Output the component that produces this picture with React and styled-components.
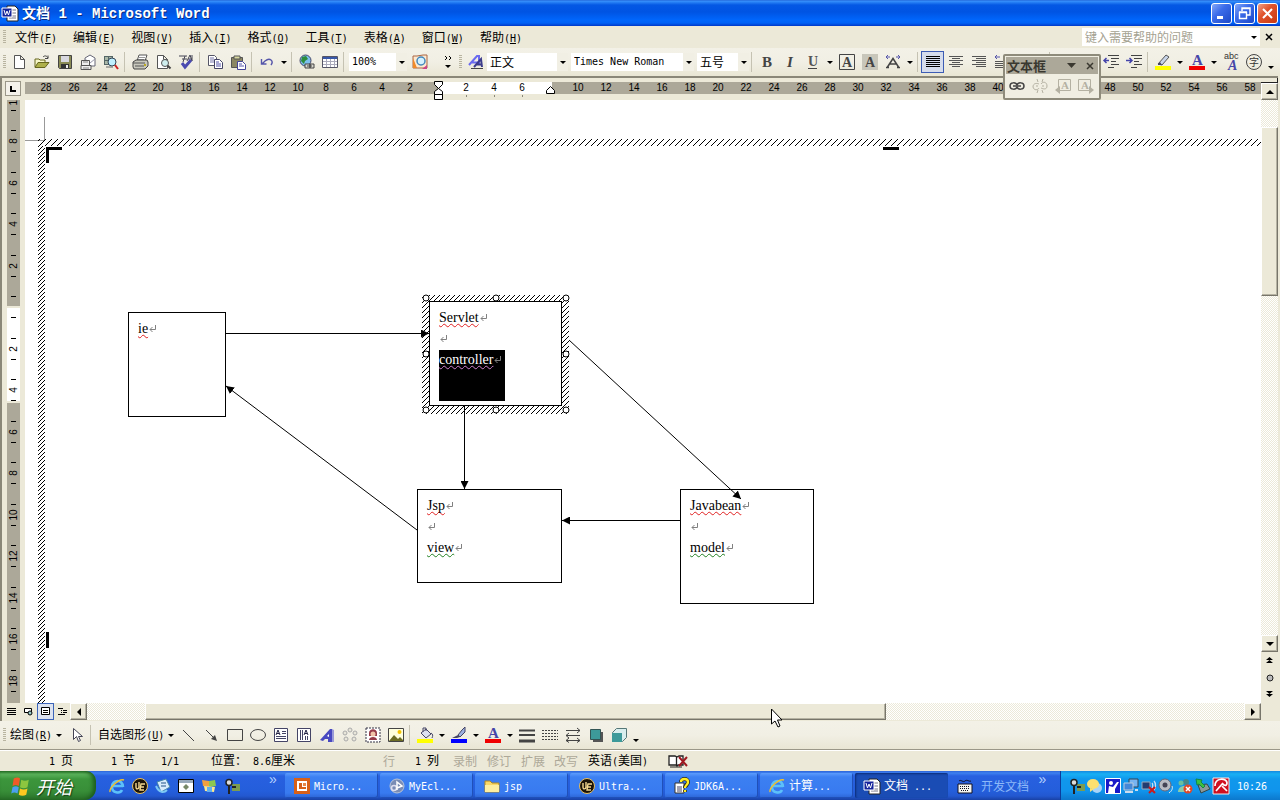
import React from 'react';
import styled, { createGlobalStyle, css } from 'styled-components';

const SANS = '"Noto Sans CJK SC", "Liberation Sans", sans-serif';
const MONO = '"DejaVu Sans Mono", "Noto Sans CJK SC", monospace';
const face = '#ece9d8';

const Global = createGlobalStyle`
  * { box-sizing: border-box; }
  body { margin: 0; background: ${face}; }
  button, select, input { font: inherit; color: inherit; margin: 0; border-radius: 0; }
  button { border: 0; padding: 0; background: none; }
  svg { display: block; flex: none; }
`;

const Window = styled.div`
  position: relative;
  display: flex;
  flex-direction: column;
  height: 100vh;
  min-height: 480px;
  overflow: hidden;
  background: ${face};
  color: #000;
  font: 12px/16px ${SANS};
  white-space: pre;
`;

const Latin = styled.span`
  font-family: ${MONO};
  font-size: 10px;
`;

/* Half-width characters use the narrow fixed face, ideographs the 12px one. */
function Txt({ children }) {
  return children.split(/([\x20-\x7e]+)/).map((part, i) =>
    i % 2 ? <Latin key={i}>{part}</Latin> : part
  );
}

/* ---------- Icons ---------- */

const paths = {
  word: <>
    <path d="M5 1h8l3 3v12H5z" fill="#fff" stroke="#222" />
    <path d="M8 5h6M9 8h5M9 11h5M7 13h7" stroke="#778" />
    <path d="M0 3h10v9H0z" fill="#16249c" stroke="#fff" />
    <path d="M2 5l1.500 5 1.500-4 1.500 4L8 5" fill="none" stroke="#fff" />
  </>,
  blank: <path d="M3.500 1.500h6l4 4v9h-10zM9.500 1.500v4h4" fill="#fff" stroke="#555" />,
  open: <>
    <path d="M1 13V5h4l1 1h5v3" fill="#f7f7c8" stroke="#66661e" />
    <path d="M1 13.500l3-5h11l-4 5z" fill="#aeb04a" stroke="#66661e" />
    <path d="M9 3c2-2 4-1 5 1m0-2.500V4.500h-3" fill="none" stroke="#444" />
  </>,
  save: <>
    <path d="M1.500 1.500h13v13h-12l-1-1z" fill="#8a8b55" stroke="#444" />
    <path d="M4 2h8v6H4z" fill="#d8d8e0" /><path d="M4 10h8v4H4z" fill="#333" /><path d="M9 11h2v3H9z" fill="#eee" />
  </>,
  mail: <>
    <path d="M5 4l5-3 5 3v8H5z" fill="#fff" stroke="#667" />
    <path d="M5 5l5 4 5-4" fill="none" stroke="#99a" />
    <path d="M1.500 6.500h8v5h-8zM1 11.500h10v4H1z" fill="#eee" stroke="#555" /><path d="M3 8h5M3 14h6" stroke="#888" />
  </>,
  search: <>
    <path d="M1 2h9v9H1z" fill="#566" /><path d="M2 3h3v3H2zM6 3h3v3H6zM2 7h3v3H2z" fill="#aab8a8" />
    <circle cx="9" cy="8" r="4" fill="#bff0ff" stroke="#345" /><path d="M12 11l3 4" stroke="#c22" strokeWidth="2" /><path d="M3 13h7" stroke="#666" />
  </>,
  print: <>
    <path d="M5 7l2-6h8l-2 6" fill="#fff" stroke="#555" /><path d="M7 3.500h6M6 5.500h6" stroke="#999" />
    <path d="M1 8l3-2h11l1 2v4l-3 3H2l-1-2z" fill="#c8c8bd" stroke="#444" /><path d="M1 9h12M3 12h9" stroke="#555" /><path d="M12 11h2" stroke="#ba2" strokeWidth="2" />
  </>,
  preview: <>
    <path d="M2.500 1.500h6l4 4v9h-10zM8.500 1.500v4h4" fill="#fff" stroke="#555" />
    <circle cx="10" cy="9" r="3.500" fill="#cfeeee" stroke="#555" /><path d="M12.500 11.500l3 3" stroke="#444" strokeWidth="2" />
  </>,
  spell: <>
    <path d="M1 2h8M4 5h5M7 2L5 8M9 7l3-6 2 6M10 5h4M14 1v6" fill="none" stroke="#445" />
    <path d="M4 9l3 4 6-7" fill="none" stroke="#4a4ab0" strokeWidth="3" />
  </>,
  copy: <>
    <path d="M1.500 1.500h6l2 2v8h-8z" fill="#fff" stroke="#556" /><path d="M3 4h4M3 6h4M3 8h4" stroke="#77a" />
    <path d="M7.500 5.500h5l3 3v6h-8z" fill="#fff" stroke="#446" /><path d="M9 8h3M9 10h5M9 12h5" stroke="#55a" />
  </>,
  paste: <>
    <path d="M1.500 3.500h11v10h-11z" fill="#8b8763" stroke="#555" /><path d="M4 2h6v3H4z" fill="#d8d8a0" stroke="#555" />
    <path d="M7.500 7.500h5l3 3v5h-8z" fill="#fff" stroke="#449" /><path d="M9 10h3M9 12h5" stroke="#55a" />
  </>,
  undo: <path d="M2.500 5v5h5M3 10l3-3c5-4 9 0 6 4" fill="none" stroke="#55a" strokeWidth="1.400" />,
  globe: <>
    <circle cx="6.500" cy="6.500" r="5.500" fill="#7cc0ee" stroke="#446" /><path d="M3 3l4-1 2 3-3 2-1 3-3-3z" fill="#2c8c3c" />
    <path d="M6 10h5v4H6zM11 10h4v4h-4zM8 12h5" fill="#d8d8d0" stroke="#444" />
  </>,
  table: <>
    <path d="M.5 2.500h15v11H.5z" fill="#fff" stroke="#556" /><path d="M1 3h14v2H1z" fill="#3858a8" />
    <path d="M1 7.500h14M1 10.500h14M4.500 5v8M8.500 5v8M12.500 5v8" stroke="#aab" />
  </>,
  docmap: <>
    <path d="M1 2h4l6-1h4v13H1z" fill="#fde9d0" stroke="#a64" /><path d="M1 4l4 10H1z" fill="#f08a2a" />
    <circle cx="9" cy="7" r="4" fill="#d6f2ff" stroke="#48b" strokeWidth="1.500" /><path d="M10 15l5-4v4z" fill="#c48" />
  </>,
  styles: <>
    <path d="M1 11L9 2h2v9M4 8.500h7" fill="none" stroke="#6a6af0" strokeWidth="2" />
    <path d="M6 13l7-8 1 8M8.500 10.500h5" fill="none" stroke="#3c3c8c" strokeWidth="2" />
    <path d="M3 14.500h12" stroke="#444" />
  </>,
  bold: <text x="3" y="13" fontFamily="Liberation Serif" fontWeight="700" fontSize="15" fill="#444">B</text>,
  italic: <text x="5" y="13" fontFamily="Liberation Serif" fontWeight="700" fontStyle="italic" fontSize="15" fill="#444">I</text>,
  underline: <><text x="3" y="12" fontFamily="Liberation Serif" fontWeight="700" fontSize="14" fill="#555">U</text><path d="M3 14.500h9" stroke="#444" /></>,
  boxA: <><path d="M.5.5h15v15H.5z" fill="none" stroke="#444" /><text x="3" y="13" fontFamily="Liberation Serif" fontWeight="700" fontSize="14" fill="#444">A</text></>,
  shadeA: <><path d="M0 0h16v16H0z" fill="#c8c6ba" /><text x="3" y="13" fontFamily="Liberation Serif" fontWeight="700" fontSize="14" fill="#444">A</text></>,
  scaleA: <><path d="M1 3h4M3 1L1 3l2 2M11 3h4M13 1l2 2-2 2" fill="none" stroke="#55a" /><path d="M1 13.500h3M12 13.500h3M2.500 13L8 4.500l5.500 8.500M5 10h6" fill="none" stroke="#444" strokeWidth="1.500" /></>,
  justify: <path d="M1 2.500h14M1 4.500h14M1 6.500h14M1 8.500h14M1 10.500h14M1 12.500h14" stroke="#000" />,
  center: <path d="M1 2.500h14M4 4.500h8M1 6.500h14M4 8.500h8M1 10.500h14M4 12.500h8" stroke="#555" />,
  right: <path d="M1 2.500h14M5 4.500h10M1 6.500h14M5 8.500h10M1 10.500h14M5 12.500h10" stroke="#555" />,
  distribute: <><path d="M1 3h5M3 1L1 3l2 2M10 3h5M13 1l2 2-2 2" fill="none" stroke="#55a" /><path d="M1 7.500h14M1 9.500h14M1 11.500h14M1 13.500h14" stroke="#555" /></>,
  spacing: <><path d="M3.500 2v11M1 4l2.500-2L6 4M1 11l2.500 2L6 11" fill="none" stroke="#55a" /><path d="M8 2.500h8M8 6.500h8M8 10.500h8M8 13.500h8" stroke="#555" /></>,
  numbered: <><path d="M2.500 2v3M2.500 7v3M2.500 12v3" stroke="#44a" /><path d="M6 3.500h9M6 8.500h9M6 13.500h9" stroke="#555" /></>,
  bullets: <><path d="M1 2h3v3H1zM1 7h3v3H1zM1 12h3v3H1z" fill="#44a" /><path d="M6 3.500h9M6 8.500h9M6 13.500h9" stroke="#555" /></>,
  outdent: <><path d="M1 6.500h5M3.500 4L1 6.500 3.500 9" fill="none" stroke="#44a" strokeWidth="1.500" /><path d="M5 1.500h11M8 4.500h8M8 7.500h5M8 10.500h8M5 13.500h6" stroke="#444" /></>,
  indent: <><path d="M0 6.500h6M3.500 4L6 6.500 3.500 9" fill="none" stroke="#44a" strokeWidth="1.500" /><path d="M5 1.500h11M8 4.500h8M8 7.500h5M8 10.500h8M5 13.500h6" stroke="#444" /></>,
  highlight: <><path d="M3 10l8-9 3 2-7 8z" fill="#c8d4e8" stroke="#555" /><path d="M3 10l2-2 2 3H3z" fill="#446" /><path d="M0 12h16v4H0z" fill="#ff0" /></>,
  fontcolor: <><text x="3" y="11" fontFamily="Liberation Serif" fontWeight="700" fontSize="15" fill="#4646a8">A</text><path d="M0 12h16v4H0z" fill="#f00000" /></>,
  phonetic: <><text x="1" y="5" fontFamily="Liberation Sans" fontSize="9" fill="#333">abc</text><text x="5" y="16" fontFamily="Liberation Serif" fontWeight="700" fontStyle="italic" fontSize="14" fill="#4646a8">A</text></>,
  circled: <><circle cx="8" cy="8" r="7.500" fill="none" stroke="#444" /><text x="3" y="12" fontFamily="Noto Sans CJK SC" fontSize="10" fill="#333">字</text></>,
  link: <path d="M1 8c0-4 6-4 7-1M1 8c0 4 6 4 7 1M8 7c1-3 7-3 7 1M8 9c1 3 7 3 7-1M4 8h8" fill="none" stroke="currentColor" strokeWidth="1.500" />,
  unlink: <path d="M1 9c0-4 4-4 6-3M1 9c1 4 5 3 6 1M9 6c2-3 6-2 6 2s-4 3-6 2M5 1l1 3M11 1l-1 3M5 15l1-3M11 15l-1-3M4 8h2M10 8h2" fill="none" stroke="currentColor" />,
  prevbox: <><path d="M3.500 1.500h12v11h-12z" fill="none" stroke="currentColor" /><text x="6" y="11" fontFamily="Liberation Serif" fontWeight="700" fontSize="11" fill="currentColor">A</text><path d="M0 12l5-4v8z" fill="currentColor" /></>,
  nextbox: <><path d="M.5 1.500h12v11H.5z" fill="none" stroke="currentColor" /><text x="3" y="11" fontFamily="Liberation Serif" fontWeight="700" fontSize="11" fill="currentColor">A</text><path d="M16 12l-5-4v8z" fill="currentColor" /></>,
  pointer: <path d="M4.500 1.500v11l3-3 2 5 2-1-2-4h4z" fill="#fff" stroke="#445" />,
  line: <path d="M2 3l11 11" stroke="#444" />,
  arrowline: <><path d="M2 3l9 9" stroke="#444" /><path d="M13 14l-6-2 4-4z" fill="#444" /></>,
  rect: <path d="M.5 2.500h15v11H.5z" fill="none" stroke="#444" />,
  ellipse: <ellipse cx="8" cy="8" rx="7.500" ry="5.500" fill="none" stroke="#444" />,
  textbox: <><path d="M1.500 1.500h13v13h-13z" fill="#fff" stroke="#446" /><path d="M9 4.500h4M9 6.500h4M3 9.500h10M3 11.500h10" stroke="#446" /><path d="M3 8l2-5 2 5M4 6.500h2" fill="none" stroke="#224" /></>,
  vtextbox: <><path d="M1.500 1.500h13v13h-13z" fill="#fff" stroke="#446" /><path d="M4.500 3v10M6.500 3v10M9.500 9v4M11.500 9v4" stroke="#446" /><path d="M8 8l2-5 2 5M9 6.500h2" fill="none" stroke="#224" /></>,
  wordart: <><path d="M1 13L11 2h2v13h-4v-3H6l-2 2z" fill="#4848c0" /><path d="M8 9l2-2v3z" fill="#fff" /><path d="M13 2l2 1v12h-2z" fill="#9a9ad8" /></>,
  diagram: <g fill="#e8e6da" stroke="#aaa"><circle cx="8" cy="3" r="2" /><circle cx="13" cy="6" r="2" /><circle cx="12" cy="12" r="2" /><circle cx="4" cy="12" r="2" /><circle cx="3" cy="6" r="2" /></g>,
  clipart: <><path d="M1 1h14v14H1z" fill="#fff" stroke="#334" strokeDasharray="2 1" /><path d="M4 13c0-4 8-4 8 0M4 6c0-5 8-5 8 0v3H4z" fill="#943a48" /><circle cx="8" cy="7" r="2.500" fill="#f0c4a8" /></>,
  picture: <><path d="M.5 1.500h15v13H.5z" fill="#ffd" stroke="#444" /><path d="M1 14l5-6 4 4 2-2 3 3v1z" fill="#6c6c24" /><circle cx="11.500" cy="5" r="2" fill="#f4c400" /></>,
  fill: <><path d="M4 6l5-4 5 5-5 4z" fill="#dce0f0" stroke="#446" /><path d="M6 5V1h3v3M14 6c2 1 2 3 1 5" fill="none" stroke="#446" /><path d="M0 12h16v4H0z" fill="#ff0" /></>,
  linecolor: <><path d="M14 0l-3 3-4 5 2 2 5-5z" fill="#9cb0e0" stroke="#446" /><path d="M7 8l2 2-3 1H1z" fill="#446" /><path d="M0 12h16v4H0z" fill="#00f" /></>,
  weights: <path d="M0 3.500h16M0 8h16M0 13.500h16M0 14.500h16" stroke="#444" strokeWidth="2" />,
  dashes: <path d="M0 3.500h16M0 6.500h16M0 9.500h16M0 12.500h16" stroke="#444" strokeDasharray="2 1" />,
  arrows: <path d="M1 3.500h14M12 1l3 2.500L12 6M1 8.500h14M4 6L1 8.500 4 11M1 13.500h14M12 11l3 2.500-3 2M4 11l-3 2.500 3 2" fill="none" stroke="#444" />,
  shadow: <><path d="M5 5h10v10H5z" fill="#555" /><path d="M2.500 2.500h10v10h-10z" fill="#3d9a9a" stroke="#355" /></>,
  cube: <><path d="M1.500 5.500l4-4h10v9l-4 4z" fill="#d8eeee" stroke="#577" /><path d="M1 6h10v9H1z" fill="#3d9a9a" /></>,
  bookx: <><path d="M1 3h6l2 1 2-1h4v9h-5l-1 1-1-1H1zM8.500 4v8" fill="#fff" stroke="#222" strokeWidth="1.300" /><path d="M2 14h12" stroke="#222" /><path d="M11 4l8 9M19 4l-8 9" stroke="#a01820" strokeWidth="2" /></>,
  flag: <><path d="M3 2c2-1 4-1 5 0L7 8C5 7 4 7 2 8z" fill="#f05a28" /><path d="M9 3c2 1 4 1 6 0l-1 6c-2 1-4 1-6 0z" fill="#8cc63f" /><path d="M2 9c2-1 3-1 5 0l-1 5c-2-1-3-1-5 0z" fill="#4aa0f0" /><path d="M8 10c2 1 4 1 6 0l-1 5c-2 1-4 1-6 0z" fill="#fcc820" /></>,
  ie: <><path d="M14 9c0-8-11-8-11 0 0 6 8 7 10 3M4 8h10" fill="none" stroke="#5cc0fa" strokeWidth="2.600" /><path d="M1 14C0 10 10 0 15 2" fill="none" stroke="#f0c030" strokeWidth="1.500" /></>,
  ue: <><circle cx="8" cy="8" r="7.500" fill="#1c1408" stroke="#e8c060" /><path d="M4 5v4c0 3 3 2 3 0V4M13 6H9l-1 6h4M9 9h3" fill="none" stroke="#f4d890" strokeWidth="1.400" /></>,
  desktop: <><path d="M2 4l9-3 4 8-9 5z" fill="#d8ecfc" stroke="#48a" /><path d="M1 8c3 7 8 7 11 4" fill="none" stroke="#7cc8f4" strokeWidth="2" /><path d="M6 5h5M6 8h5" stroke="#258" /></>,
  panel: <><path d="M.5 1.500h15v13H.5z" fill="#fff" stroke="#000" /><path d="M1 2h14v3H1z" fill="#9ab" /><path d="M8 6l3 3-3 3-3-3z" fill="#786" /></>,
  notes: <><path d="M1 2l7 1v6L2 8z" fill="#f0a040" /><path d="M8 3l6-1 1 6-7 1z" fill="#8cc850" /><path d="M3 8l11 1-1 5-9-1z" fill="#fce890" /><path d="M6 9h5v5H6z" fill="#60b0f0" /></>,
  key: <><path d="M8 6h8v7H8z" fill="#7c9c50" /><circle cx="5" cy="4.500" r="3" fill="#ddd" stroke="#222" strokeWidth="1.500" /><path d="M5 8v8M8 9h4" stroke="#222" strokeWidth="2" /></>,
  ppt: <><path d="M0 0h16v16H0z" fill="#d86018" /><path d="M3 3h10v10H3z" fill="#fff" /><path d="M5 5h3v4h4v2H5z" fill="#d86018" /><path d="M9 5h3v3H9z" fill="#e88848" /></>,
  eclipse: <><circle cx="8" cy="8" r="7" fill="#7a8cb4" stroke="#b8c4d8" /><circle cx="5" cy="10" r="2.500" fill="none" stroke="#dde" strokeWidth="1.500" /><path d="M8 12V4l5 4-5 2" fill="none" stroke="#fff" strokeWidth="1.500" /></>,
  folder: <><path d="M1 14V3h5l2 2h7v9z" fill="#f8d868" stroke="#b08820" /><path d="M1 14V7h14v7z" fill="#fdeea0" /></>,
  help: <><path d="M1 5h9v10H1z" fill="#fff" stroke="#333" /><path d="M3 9h5M3 11h5M3 13h5" stroke="#446" /><path d="M7 4c0-4 7-4 7 0 0 3-3 3-3 6M11 12v2" fill="none" stroke="#222" strokeWidth="4" /><path d="M7 4c0-4 7-4 7 0 0 3-3 3-3 6M11 12v2" fill="none" stroke="#fe2" strokeWidth="2.400" /></>,
  keyboard: <><path d="M2 3c2-2 4 2 6 0s4 1 6 0" fill="none" stroke="#112" /><path d="M1 6h14v9H1z" fill="#f4f4f0" stroke="#112" /><path d="M3 8.500h10M3 10.500h10M4 12.500h8" stroke="#112" strokeDasharray="1 1" /></>,
  chat: <><circle cx="10" cy="10" r="5" fill="#a8d4f8" /><ellipse cx="6" cy="6" rx="6" ry="5" fill="#fce070" /><path d="M3 10v4l4-3z" fill="#fce070" /></>,
  runner: <><path d="M.5.500h15v15H.5z" fill="#1818c8" stroke="#fff" /><circle cx="6" cy="5" r="2" fill="#fff" /><path d="M3 15l1-7 4 1 4-5h2l-4 7v4z" fill="#fff" /></>,
  screens: <><path d="M6 1h9v8H6z" fill="#78b4f0" stroke="#345" /><path d="M1 5h9v7H1z" fill="#4488d8" stroke="#bcd" /><path d="M2 14h8M12 12h3" stroke="#cde" strokeWidth="2" /></>,
  wireless: <><path d="M1 4h8v7H1z" fill="#223c70" stroke="#9ab" /><path d="M11 5c1 1 1 4 0 5M13 3c2 2 2 7 0 9" fill="none" stroke="#cde" strokeWidth="1.300" /><path d="M8 9l6 6M14 9l-6 6" stroke="#d01818" strokeWidth="2" /></>,
  volume: <><circle cx="6" cy="7" r="6" fill="#b8bcc4" stroke="#667" /><circle cx="6" cy="7" r="2.500" fill="#445" /><path d="M13 8c1 2 0 5-3 7" fill="none" stroke="#eee" /></>,
  messenger: <><circle cx="9" cy="4" r="3" fill="#488" /><circle cx="4" cy="5" r="2.500" fill="#68c0a0" /><path d="M1 14c0-8 12-8 13 0z" fill="#8ccca8" /><circle cx="11" cy="11" r="4.500" fill="#e04828" /><path d="M9 9l4 4M13 9l-4 4" stroke="#fff" strokeWidth="1.500" /></>,
  eject: <><path d="M3 7l9-1 3 5-9 4z" fill="#8a9898" stroke="#344" /><path d="M1 1l6 1-1 2 4 4-2 2-4-4-2 1z" fill="#3cc040" stroke="#184" /></>,
  avira: <><path d="M0 0h16v16H0z" fill="#d01020" stroke="#eee" /><path d="M2 8c0-9 12-8 12-3 0 4-5 2-4 0L3 13M9 8l5 5" fill="none" stroke="#fff" strokeWidth="1.700" /></>,
};

function Icon({ name, size = 16 }) {
  return <svg width={size} height={size} viewBox="0 0 16 16" overflow="visible" aria-hidden="true">{paths[name]}</svg>;
}

const Caret = styled.span`
  flex: none;
  width: 0;
  height: 0;
  border: solid transparent;
  ${p => p.$dir === 'up' && css`border-width: 0 4px 4px; border-bottom-color: #000;`}
  ${p => p.$dir === 'left' && css`border-width: 4px 4px 4px 0; border-right-color: #000;`}
  ${p => p.$dir === 'right' && css`border-width: 4px 0 4px 4px; border-left-color: #000;`}
  ${p => !p.$dir && css`border-width: 3px 3px 0; border-top-color: #000;`}
  ${p => p.$dir === 'down' && css`border-width: 4px 4px 0; border-top-color: #000;`}
`;

/* ---------- Title bar ---------- */

const TitleBar = styled.header`
  display: flex;
  flex: none;
  align-items: center;
  gap: 2px;
  height: 26px;
  padding: 0 2px;
  background: linear-gradient(#1c5cd0 0, #3a92fc 1px, #2a84f6 2px, #0458e4 5px, #0054e3 12px, #0066fc 20px, #0062f6 23px, #0038c8 26px);
`;
const Title = styled.h1`
  flex: 1;
  margin: 0 0 0 2px;
  color: #fff;
  font: 700 14px/20px ${SANS};
  text-shadow: 1px 1px #0a2a80;
  span { font: 700 14px/20px "Liberation Mono", monospace; }
`;
const WinButton = styled.button`
  display: grid;
  place-items: center;
  width: 21px;
  height: 21px;
  border: 1px solid #fff;
  border-radius: 3px;
  background: ${p => p.$close
    ? 'linear-gradient(135deg, #f0a088, #e0532c 40%, #c83810)'
    : 'linear-gradient(135deg, #84a8f8, #3c6cea 40%, #1c48c8)'};
`;

/* ---------- Menu bar ---------- */

const MenuBar = styled.nav`
  display: flex;
  flex: none;
  align-items: center;
  height: 22px;
  padding-right: 2px;
`;
const Grip = styled.span`
  flex: none;
  width: 3px;
  height: 14px;
  margin: 0 0 0 3px;
  background: repeating-linear-gradient(#b8b4a0 0 1px, transparent 1px 2px);
`;
const MenuItem = styled.button`
  height: 22px;
  padding: 2px 8px 0;
  u { text-underline-offset: 1px; }
`;
const MenuList = styled.div`
  display: flex;
  flex: 1;
  padding-left: 1px;
`;
const HelpBox = styled.div`
  display: flex;
  align-items: center;
  width: 178px;
  height: 18px;
  padding-right: 3px;
  background: #fff;
`;
const HelpInput = styled.input`
  flex: 1;
  min-width: 0;
  height: 16px;
  padding: 0 3px;
  border: 0;
  outline: 0;
  background: none;
  &::placeholder { color: #a5a291; opacity: 1; }
`;
const CloseDoc = styled.button`
  display: grid;
  place-items: center;
  width: 18px;
  height: 16px;
`;

/* ---------- Toolbars ---------- */

const Toolbar = styled.div`
  display: flex;
  flex: none;
  align-items: center;
  height: 28px;
  background: linear-gradient(#f3f1e7, #f1efe4 50%, #e9e6d4);
`;
const Group = styled.div`
  display: flex;
  flex: none;
  align-items: center;
  padding-left: ${p => p.$lead || 0}px;
`;
const ToolButton = styled.button`
  display: grid;
  flex: none;
  place-items: center;
  width: 23px;
  height: 22px;
  ${p => p.$on && css`background: #d5dcec; border: 1px solid #3c5cb4;`}
`;
const DropButton = styled.button`
  display: grid;
  flex: none;
  place-items: center;
  width: 11px;
  height: 22px;
`;
const EndButton = styled(DropButton)`
  place-items: end center;
  padding-bottom: 4px;
`;
const Rule = styled.span`
  flex: none;
  width: 1px;
  height: 20px;
  margin: 0 3px 0 2px;
  background: #c5c2b2;
`;
const Combo = styled.label`
  display: grid;
  flex: none;
  grid-template-columns: 1fr 11px;
  align-items: center;
  width: ${p => p.$w}px;
  height: 18px;
  margin-right: ${p => p.$after || 0}px;
  background: linear-gradient(#fff, #fff) no-repeat 0 0 / calc(100% - 11px) 100%, #f1efe4;
  select {
    grid-area: 1 / 1 / 2 / 3;
    height: 18px;
    padding: 0 3px;
    border: 0;
    background: none;
    appearance: none;
    font: ${p => (p.$cjk ? `12px/16px ${SANS}` : `10px/16px ${MONO}`)};
  }
  span { grid-area: 1 / 2; justify-self: center; }
`;
const LabelButton = styled.button`
  display: flex;
  align-items: center;
  gap: 4px;
  height: 22px;
  padding: 0 3px 0 4px;
`;
const MoreButton = styled.button`
  display: grid;
  justify-items: center;
  align-content: center;
  gap: 4px;
  width: 16px;
  height: 22px;
  margin-left: 9px;
`;

function Tool({ icon, on }) {
  return <ToolButton $on={on} aria-label={icon}><Icon name={icon} /></ToolButton>;
}

/* "|" is a divider, "v" a drop-down arrow, anything else an icon name. */
function Tools({ items, lead }) {
  return (
    <Group $lead={lead}>
      {items.split(' ').map((it, i) =>
        it === '|' ? <Rule key={i} />
          : it === 'v' ? <DropButton key={i} aria-label="More"><Caret /></DropButton>
            : <Tool key={i} icon={it} on={it === 'justify'} />
      )}
    </Group>
  );
}

function ComboBox({ value, label, w, cjk, after }) {
  return (
    <Combo $w={w} $cjk={cjk} $after={after}>
      <select aria-label={label} defaultValue={value}><option>{value}</option></select>
      <Caret />
    </Combo>
  );
}

/* ---------- Floating toolbar ---------- */

const Palette = styled.section`
  position: absolute;
  z-index: 2;
  top: 54px;
  left: 1003px;
  width: 98px;
  height: 46px;
  border: 2px solid #8e8b7b;
  border-radius: 2px;
  background: #f0eee2;
`;
const PaletteHead = styled.div`
  display: flex;
  align-items: center;
  height: 17px;
  margin: 1px;
  padding-left: 1px;
  background: #aca899;
  color: #3a3830;
  h2 { flex: 1; margin: 0; font: 700 13px/16px ${SANS}; }
  button { display: grid; place-items: center; width: 16px; height: 14px; margin-left: 3px; }
`;
const PaletteTools = styled.div`
  display: flex;
  align-items: center;
  color: #b4b1a2;
  button:first-child { color: #444; }
`;

/* ---------- Workspace ---------- */

const Workspace = styled.main`
  display: grid;
  flex: 1;
  grid-template-columns: 23px 1fr 17px;
  grid-template-rows: 22px 1fr 18px;
  min-height: 0;
  margin-right: 2px;
  border-top: 2px solid #8a8778;
  border-left: 2px solid #8a8778;
`;
const Corner = styled.div`
  display: grid;
  place-items: center;
  width: 16px;
  height: 15px;
  margin: 3px 0 0 3px;
  border: 1px solid #9a9788;
  background: #f4f2ea;
`;
const Ruler = styled.div`
  height: 22px;
  overflow: hidden;
`;
const RulerBar = styled.div`
  display: flex;
  height: 12px;
  margin-top: 4px;
  padding-left: 7px;
  background: linear-gradient(90deg, #aca899 413px, #fff 413px 527px, #aca899 527px);
  font: 10px/12px "Liberation Sans", sans-serif;
`;
const RulerCell = styled.span`
  display: flex;
  flex: none;
  align-items: center;
  justify-content: center;
  width: 28px;
  height: 12px;
`;
const TickRow = styled.div`
  display: flex;
  gap: 27px;
  padding: 1px 0 0 441px;
  i { width: 1px; height: 2px; background: #8a8778; }
`;
const SideRuler = styled.div`
  width: 13px;
  margin-left: 5px;
  overflow: hidden;
  background: linear-gradient(#aca899 206px, ${face} 206px 208px, #fff 208px 301px, ${face} 301px 303px, #aca899 303px);
  font: 10px/12px "Liberation Sans", sans-serif;
`;
const SideCell = styled.div`
  display: grid;
  grid-template-rows: 1px 12px 1px;
  align-content: center;
  justify-items: center;
  row-gap: 4px;
  height: ${p => (p.$tall ? 42 : 41)}px;
  &:first-child { margin-top: -21px; }
  i { width: 5px; height: 1px; background: #000; }
  span { transform: rotate(-90deg); }
`;

const checker = css`
  background: conic-gradient(#fff 25%, #ece9d8 0 50%, #fff 0 75%, #ece9d8 0) 0 0 / 2px 2px;
`;
const raised = css`
  border: 1px solid;
  border-color: #fff #77756a #77756a #fff;
  box-shadow: inset -1px -1px #b5b2a2;
  background: ${face};
`;
const VScroll = styled.div`
  display: flex;
  grid-column: 3;
  grid-row: 1 / 3;
  flex-direction: column;
`;
const Split = styled.div`
  flex: none;
  height: 5px;
  border: solid #222;
  border-width: 0 1px 1px 0;
`;
const Track = styled.div`
  display: flex;
  flex: 1;
  flex-direction: ${p => (p.$vertical ? 'column' : 'row')};
  ${checker}
`;
const Thumb = styled.div`
  flex: ${p => p.$part} 1 0;
  ${raised}
`;
const Space = styled.div`
  flex: ${p => p.$part} 1 0;
`;
const ScrollButton = styled.button`
  display: grid;
  flex: none;
  place-items: center;
  width: 17px;
  height: 17px;
  ${raised}
`;
const Browse = styled.button`
  display: grid;
  flex: none;
  place-items: center;
  width: 17px;
  height: 17px;
`;
const HScroll = styled.div`
  display: flex;
  grid-column: 1 / 3;
  height: 17px;
`;
const Views = styled.div`
  display: flex;
  flex: none;
  width: 68px;
  padding-left: 1px;
`;
const ViewButton = styled.button`
  display: grid;
  flex: none;
  place-items: center;
  width: 17px;
  height: 17px;
  ${p => p.$on && css`border: 1px solid #3c64b8; background: #dbe2f0;`}
`;

/* ---------- Document canvas ---------- */

const Canvas = styled.article`
  position: relative;
  overflow: hidden;
  background: #fff;
`;
const Drawing = styled.svg`
  position: absolute;
  top: 0;
  left: 0;
  width: 100%;
  height: 100%;
  pointer-events: none;
`;
const Node = styled.section`
  position: absolute;
  top: ${p => p.$y}px;
  left: ${p => p.$x}px;
  width: ${p => p.$w}px;
  height: ${p => p.$h}px;
  padding: 6px 9px;
  border: 1px solid #000;
  background: #fff;
  font: 14px/20px "Liberation Serif", serif;
  p { width: fit-content; margin: 0 0 1px; }
`;
const Word = styled.span`
  text-decoration: underline wavy ${p => p.$mark} 1px;
  text-decoration-skip-ink: none;
  text-underline-offset: 1px;
`;
const Selected = styled.p`
  && { width: 66px; height: 51px; }
  background: #000;
  color: #fff;
`;
const Mark = styled.span`
  display: inline-block;
  margin-left: 1px;
`;
const LineEnd = () => (
  <Mark>
    <svg width="8" height="8" viewBox="0 0 8 8" aria-hidden="true">
      <path d="M6.500 0v4.500H1M3.500 2l-2.500 2.500L3.500 7" fill="none" stroke="#808080" />
    </svg>
  </Mark>
);

/* ---------- Status bar ---------- */

const StatusBar = styled.footer`
  display: flex;
  flex: none;
  align-items: center;
  height: 22px;
  border-top: 1px solid #9a9788;
  box-shadow: inset 0 1px #fff;
`;
const Stat = styled.span`
  flex: none;
  width: ${p => p.$w}px;
  color: ${p => (p.$off ? '#aca899' : '#000')};
`;

/* ---------- Taskbar ---------- */

const Taskbar = styled.div`
  display: flex;
  flex: none;
  height: 29px;
  background: linear-gradient(#2c64d8, #3e80f0 2px, #2860e0 5px, #245edb 20px, #2358d0 25px, #1941a5);
  color: #fff;
`;
const Start = styled.button`
  display: flex;
  flex: none;
  align-items: center;
  gap: 6px;
  width: 96px;
  padding-left: 10px;
  border-radius: 0 10px 12px 0;
  background: linear-gradient(#2c7c2c, #5cb45c 3px, #3c963c 8px, #388e38 20px, #2a722a);
  box-shadow: inset -3px 0 4px #1c5c1c;
  color: #fff;
  font: italic 18px/24px ${SANS};
  text-shadow: 1px 1px 1px #143c14;
`;
const Quick = styled.div`
  display: flex;
  flex: none;
  align-items: center;
  gap: 7px;
  width: 189px;
  padding: 0 4px 0 13px;
`;
const Chevron = styled.button`
  align-self: flex-start;
  width: 16px;
  margin-left: auto;
  color: #b8d4ff;
  font: 14px/16px "Liberation Sans", sans-serif;
`;
const Tasks = styled.div`
  display: flex;
  flex: 1;
  align-items: center;
  gap: 2px;
  min-width: 0;
`;
const Task = styled.button`
  display: flex;
  flex: 0 1 93px;
  align-items: center;
  gap: 4px;
  height: 25px;
  min-width: 0;
  padding: 0 9px;
  overflow: hidden;
  border-radius: 2px;
  color: #fff;
  background: ${p => (p.$on ? '#1a4cb4' : 'linear-gradient(#5c9cfc, #3c80f2 4px, #387af0 20px, #2c64d4)')};
  box-shadow: ${p => (p.$on ? 'inset 1px 1px 2px #0c2c78' : 'inset -1px -1px #2050b8')};
`;
const DeskBand = styled.div`
  display: flex;
  flex: none;
  align-items: center;
  gap: 8px;
  width: 111px;
  padding: 0 12px 0 8px;
  color: #8cb8f8;
`;
const Tray = styled.div`
  display: flex;
  flex: none;
  align-items: center;
  gap: 2px;
  width: 220px;
  padding-left: 8px;
  border-left: 1px solid #0c3c9c;
  background: linear-gradient(#1488e0, #18b0f4 3px, #1098ec 8px, #1094ec 20px, #0c78cc);
`;
const Clock = styled.time`
  margin-left: 6px;
`;
const Pointer = styled.svg`
  position: absolute;
  z-index: 3;
  top: 708px;
  left: 771px;
`;

/* ---------- Content ---------- */

const menus = [['文件', 'F'], ['编辑', 'E'], ['视图', 'V'], ['插入', 'I'], ['格式', 'O'], ['工具', 'T'], ['表格', 'A'], ['窗口', 'W'], ['帮助', 'H']];
const range = (from, to, step) => Array.from({ length: (to - from) / step + 1 }, (_, i) => from + i * step);
const marks = [...range(28, 2, -2), 0, 2, 4, 6, 8, ...range(10, 58, 2)];
const sideMarks = [10, 8, 6, 4, 2, 0, 2, 4, 6, 8, 10, 12, 14, 16, 18];
const tasks = [['ppt', 'Micro...'], ['eclipse', 'MyEcl...'], ['folder', 'jsp'], ['ue', 'Ultra...'], ['help', 'JDK6A...'], ['ie', '计算...'], ['word', '文档 ...', true]];
const stats = [['1 页', 62], ['1 节', 50], ['1/1', 50], ['位置： 8.6厘米', 172], ['行', 32, true], ['1 列', 38], ['录制', 34, true], ['修订', 34, true], ['扩展', 33, true], ['改写', 34, true], ['英语(美国)', 80]];

const FirstMarker = () => (
  <svg width="11" height="20" viewBox="0 0 11 20" overflow="visible" aria-hidden="true">
    <path d="M1.500 1.500h8v3l-4 4 4 3v3h-8v-3l4-3-4-4zM1.500 14.500h8v5h-8z" fill="#fff" stroke="#000" />
  </svg>
);
const RightMarker = () => (
  <svg width="9" height="8" viewBox="0 0 9 8" overflow="visible" aria-hidden="true">
    <path d="M4.500.5l4 4v3h-8v-3z" fill="#fff" stroke="#000" />
  </svg>
);
const FirstIndent = styled(RulerCell)`
  height: 16px;
  margin-top: -2px;
  align-items: flex-start;
`;
const RightIndent = styled(RulerCell)`
  align-items: flex-end;
`;

function Diagram() {
  const handles = [[401, 198], [471, 198], [541, 198], [401, 254], [541, 254], [401, 310], [471, 310], [541, 310]];
  return (
    <Canvas>
      <Drawing aria-hidden="true">
        <defs>
          <pattern id="hatch" width="4" height="4" patternUnits="userSpaceOnUse">
            <path d="M3 0h1v1h-1zM2 1h1v1h-1zM1 2h1v1h-1zM0 3h1v1h-1z" fill="#000" shapeRendering="crispEdges" />
          </pattern>
          <pattern id="wideHatch" width="6" height="6" patternUnits="userSpaceOnUse">
            <path d="M5 0h1v1h-1zM4 1h1v1h-1zM3 2h1v1h-1zM2 3h1v1h-1zM1 4h1v1h-1zM0 5h1v1h-1z" fill="#000" shapeRendering="crispEdges" />
          </pattern>
          <pattern id="frameHatch" width="5" height="5" patternUnits="userSpaceOnUse">
            <path d="M4 0h1v1h-1zM3 1h1v1h-1zM2 2h1v1h-1zM1 3h1v1h-1zM0 4h1v1h-1z" fill="#000" shapeRendering="crispEdges" />
          </pattern>
        </defs>
        <path d="M0 40.500h19.500V17" fill="none" stroke="#999" />
        <rect x="13" y="39" width="100%" height="7" fill="url(#wideHatch)" />
        <rect x="13" y="46" width="7" height="100%" fill="url(#hatch)" />
        <path d="M21 47h16v3H24v13h-3zM858 47h16v3h-16zM21 532h3v16h-3z" />
        <path d="M397 195h147v119H397z" fill="url(#frameHatch)" />
      </Drawing>
      <Node $x={103} $y={212} $w={98} $h={105}>
        <p><Word $mark="#e02020">ie</Word><LineEnd /></p>
      </Node>
      <Node $x={404} $y={201} $w={133} $h={105}>
        <p><Word $mark="#e02020">Servlet</Word><LineEnd /></p>
        <p><LineEnd /></p>
        <Selected><Word $mark="#d080d0">controller</Word><LineEnd /></Selected>
      </Node>
      <Node $x={392} $y={389} $w={145} $h={94}>
        <p><Word $mark="#e02020">Jsp</Word><LineEnd /></p>
        <p><LineEnd /></p>
        <p><Word $mark="#208020">view</Word><LineEnd /></p>
      </Node>
      <Node $x={655} $y={389} $w={134} $h={115}>
        <p><Word $mark="#e02020">Javabean</Word><LineEnd /></p>
        <p><LineEnd /></p>
        <p><Word $mark="#208020">model</Word><LineEnd /></p>
      </Node>
      <Drawing aria-hidden="true">
        <defs>
          <marker id="tip" markerWidth="9" markerHeight="8" refX="8" refY="4" orient="auto" markerUnits="userSpaceOnUse">
            <path d="M0 0l8 4-8 4z" />
          </marker>
        </defs>
        <g stroke="#000" fill="none">
          <path d="M201 233.500h203" markerEnd="url(#tip)" />
          <path d="M544 240l172 159" markerEnd="url(#tip)" />
          <path d="M439.500 306v83" markerEnd="url(#tip)" />
          <path d="M655 420.500H537" markerEnd="url(#tip)" />
          <path d="M392 430L201 286" markerEnd="url(#tip)" />
        </g>
        {handles.map(([x, y]) => <circle key={x + '-' + y} cx={x} cy={y} r="3" fill="#fff" stroke="#000" />)}
      </Drawing>
    </Canvas>
  );
}

export default function App() {
  return (
    <Window>
      <Global />
      <TitleBar>
        <Icon name="word" />
        <Title>文档<span> 1 - Microsoft Word</span></Title>
        <WinButton aria-label="Minimize"><svg width="13" height="13"><path d="M2 9h6v3H2z" fill="#fff" /></svg></WinButton>
        <WinButton aria-label="Restore"><svg width="13" height="13"><path d="M4 4V1h8v7H9M1.500 5.500h7v6h-7zM1 5h8M4 1.500h8" fill="none" stroke="#fff" strokeWidth="1.400" /></svg></WinButton>
        <WinButton $close aria-label="Close"><svg width="13" height="13"><path d="M2 2l9 9M11 2l-9 9" stroke="#fff" strokeWidth="2" /></svg></WinButton>
      </TitleBar>

      <MenuBar>
        <Grip />
        <MenuList>
          {menus.map(([name, key]) => (
            <MenuItem key={key}>{name}<Latin>(<u>{key}</u>)</Latin></MenuItem>
          ))}
        </MenuList>
        <HelpBox>
          <HelpInput aria-label="Help" placeholder="键入需要帮助的问题" />
          <Caret />
        </HelpBox>
        <CloseDoc aria-label="Close document"><svg width="8" height="8"><path d="M1 1l6 6M7 1L1 7" stroke="#000" strokeWidth="1.500" /></svg></CloseDoc>
      </MenuBar>

      <Toolbar>
        <Grip />
        <Tools lead={1} items="blank open save mail search | print preview spell | copy paste | undo v | globe table |" />
        <Group $lead={2}>
          <ComboBox value="100%" label="Zoom" w={58} after={1} />
          <Tool icon="docmap" />
          <MoreButton aria-label="Toolbar options">
            <svg width="9" height="5"><path d="M1 0l2 2-2 2M5 0l2 2-2 2" fill="none" stroke="#000" /></svg>
            <Caret />
          </MoreButton>
          <Grip />
        </Group>
        <Group $lead={2}>
          <Tool icon="styles" />
          <ComboBox value="正文" label="Style" w={81} cjk after={3} />
          <ComboBox value="Times New Roman" label="Font" w={123} after={3} />
          <ComboBox value="五号" label="Font size" w={52} cjk />
        </Group>
        <Tools items="| bold italic underline v boxA shadeA scaleA v | justify center right distribute spacing v | numbered bullets outdent indent | highlight v fontcolor v phonetic circled" />
        <EndButton aria-label="Toolbar options"><Caret /></EndButton>
      </Toolbar>

      <Palette>
        <PaletteHead>
          <h2>文本框</h2>
          <button aria-label="Options"><svg width="9" height="5"><path d="M0 0h9L4.500 5z" fill="#3a3830" /></svg></button>
          <button aria-label="Close"><svg width="8" height="8"><path d="M1 1l6 6M7 1L1 7" stroke="#3a3830" strokeWidth="1.500" /></svg></button>
        </PaletteHead>
        <PaletteTools>
          <Tool icon="link" /><Tool icon="unlink" /><Tool icon="prevbox" /><Tool icon="nextbox" />
        </PaletteTools>
      </Palette>

      <Workspace>
        <Corner><svg width="6" height="6"><path d="M1 0v5h5" fill="none" stroke="#000" strokeWidth="2" /></svg></Corner>
        <Ruler>
          <RulerBar>
            {marks.map((m, i) => i === 14 ? <FirstIndent key={i}><FirstMarker /></FirstIndent>
              : i === 18 ? <RightIndent key={i}><RightMarker /></RightIndent>
                : <RulerCell key={i}>{m}</RulerCell>)}
          </RulerBar>
          <TickRow><i /><i /><i /></TickRow>
        </Ruler>
        <VScroll>
          <Split />
          <ScrollButton aria-label="Scroll up"><Caret $dir="up" /></ScrollButton>
          <Track $vertical><Space $part={27} /><Thumb $part={168} /><Space $part={341} /></Track>
          <ScrollButton aria-label="Scroll down"><Caret $dir="down" /></ScrollButton>
          <Browse aria-label="Previous page"><svg width="7" height="7"><path d="M3.500 0L7 3H0zM3.500 3L7 6H0z" /></svg></Browse>
          <Browse aria-label="Browse object"><svg width="8" height="8"><circle cx="4" cy="4" r="3" fill="#bbb" stroke="#222" /></svg></Browse>
          <Browse aria-label="Next page"><svg width="7" height="7"><path d="M0 0h7L3.500 3zM0 3h7L3.500 6z" /></svg></Browse>
        </VScroll>
        <SideRuler>
          {sideMarks.map((m, i) => (
            <SideCell key={i} $tall={i % 2 === 1}>
              <i /><span>{m || ''}</span><i />
            </SideCell>
          ))}
        </SideRuler>
        <Diagram />
        <HScroll>
          <Views>
            <ViewButton aria-label="Normal view"><svg width="9" height="9"><path d="M0 1.500h9M0 3.500h9M0 5.500h9M0 7.500h9" stroke="#000" /></svg></ViewButton>
            <ViewButton aria-label="Web view"><svg width="9" height="9"><path d="M.5 1.500h7v4h-7z" fill="#fff" stroke="#000" /><circle cx="6" cy="6" r="2" fill="#9cc" stroke="#000" /></svg></ViewButton>
            <ViewButton $on aria-label="Print view"><svg width="9" height="9"><path d="M.5.5h8v7h-8zM2 3.500h5M2 5.500h5" fill="#fff" stroke="#000" /></svg></ViewButton>
            <ViewButton aria-label="Outline view"><svg width="9" height="9"><path d="M0 1.500h5M3 3.500h1M5 3.500h4M3 5.500h1M5 5.500h4M0 7.500h7" stroke="#000" /></svg></ViewButton>
          </Views>
          <ScrollButton aria-label="Scroll left"><Caret $dir="left" /></ScrollButton>
          <Track><Space $part={58} /><Thumb $part={740} /><Space $part={359} /></Track>
          <ScrollButton aria-label="Scroll right"><Caret $dir="right" /></ScrollButton>
        </HScroll>
      </Workspace>

      <Toolbar as="section">
        <Grip />
        <LabelButton><span>绘图<Latin>(<u>R</u>)</Latin></span><Caret /></LabelButton>
        <Tools items="pointer |" />
        <LabelButton><span>自选图形<Latin>(<u>U</u>)</Latin></span><Caret /></LabelButton>
        <Tools items="line arrowline rect ellipse textbox vtextbox wordart diagram clipart picture | fill v linecolor v fontcolor v weights dashes arrows shadow cube" />
        <EndButton aria-label="Toolbar options"><Caret /></EndButton>
      </Toolbar>

      <StatusBar>
        <Stat $w={49} />
        {stats.map(([text, w, off]) => <Stat key={text} $w={w} $off={off}><Txt>{text}</Txt></Stat>)}
        <Icon name="bookx" />
      </StatusBar>

      <Taskbar>
        <Start><Icon name="flag" size={20} />开始</Start>
        <Quick>
          <Icon name="ie" /><Icon name="ue" /><Icon name="desktop" /><Icon name="panel" /><Icon name="notes" /><Icon name="key" />
          <Chevron aria-label="More shortcuts">»</Chevron>
        </Quick>
        <Tasks>
          {tasks.map(([icon, text, on]) => (
            <Task key={icon} $on={on}><Icon name={icon} /><span><Txt>{text}</Txt></span></Task>
          ))}
        </Tasks>
        <DeskBand><Icon name="keyboard" />开发文档<Chevron aria-label="More items">»</Chevron></DeskBand>
        <Tray>
          {['key', 'chat', 'runner', 'screens', 'wireless', 'volume', 'messenger', 'eject', 'avira'].map(n => <Icon key={n} name={n} />)}
          <Clock><Txt>10:26</Txt></Clock>
        </Tray>
      </Taskbar>

      <Pointer width="12" height="20" viewBox="0 0 12 20" aria-hidden="true">
        <path d="M.5 1v15l3.500-3 3 6 2-1-2.500-6H11z" fill="#fff" stroke="#000" />
      </Pointer>
    </Window>
  );
}
